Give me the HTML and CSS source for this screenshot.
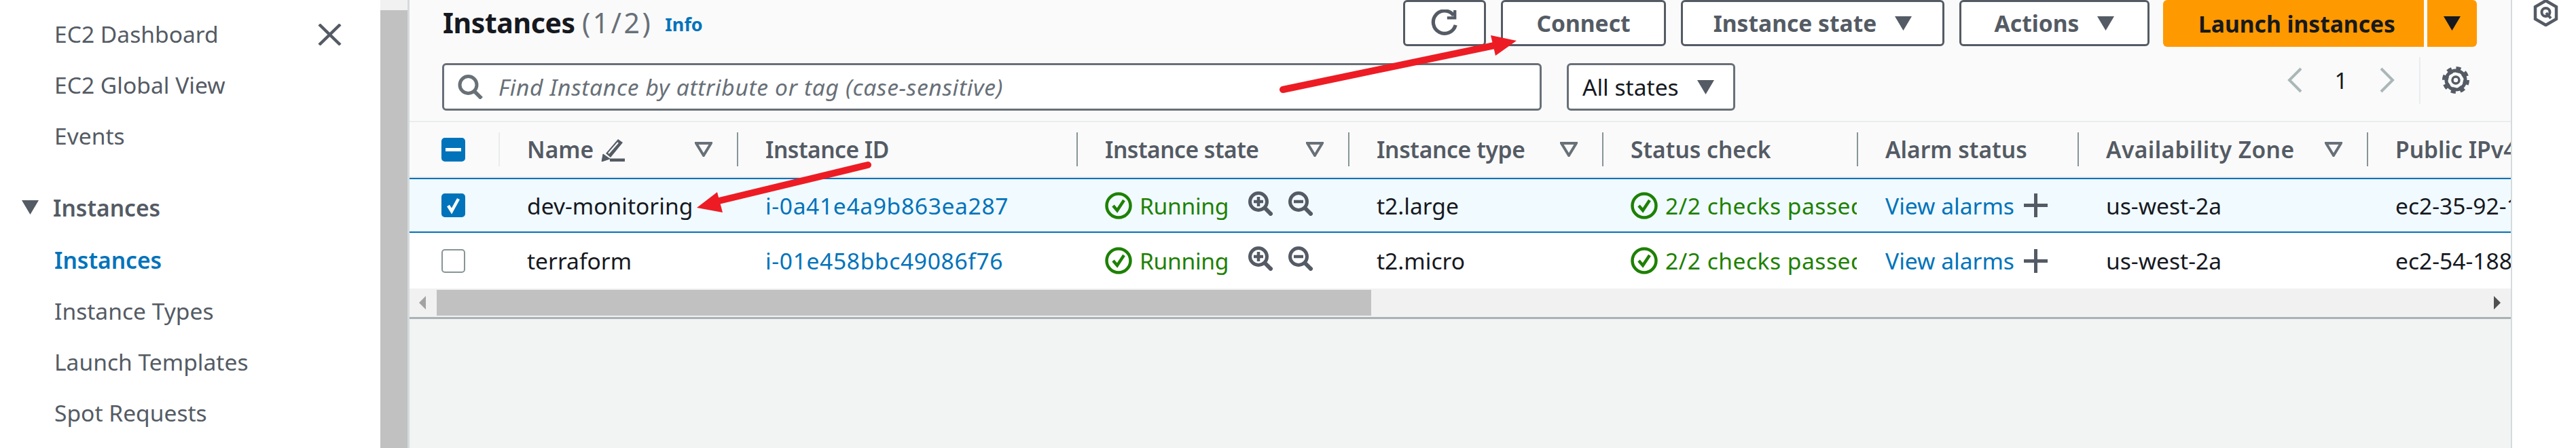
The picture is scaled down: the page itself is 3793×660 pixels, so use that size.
FILE: index.html
```html
<!DOCTYPE html>
<html lang="en">
<head>
<meta charset="utf-8">
<title>Instances | EC2</title>
<link rel="stylesheet" href="styles.css">
</head>
<body>
<div class="app">
  <nav class="sidebar">
    <div class="nav-top">
      <a class="nav-link">EC2 Dashboard</a>
      <svg class="close" viewBox="0 0 35 32"><path d="M2 1 33 31M33 1 2 31" fill="none" stroke="#545b64" stroke-width="4.5"/></svg>
    </div>
    <a class="nav-link">EC2 Global View</a>
    <a class="nav-link">Events</a>
    <div class="nav-section">
      <svg class="nav-caret" viewBox="0 0 25 21"><path d="M0 0H25L12.500 21Z" fill="#545b64"/></svg>
      <span>Instances</span>
    </div>
    <a class="nav-link active">Instances</a>
    <a class="nav-link">Instance Types</a>
    <a class="nav-link">Launch Templates</a>
    <a class="nav-link">Spot Requests</a>
  </nav>
  <div class="vscroll"><div class="vthumb"></div></div>
  <main class="main">
    <header class="top">
      <h1 class="title">Instances <span class="count">(1/2)</span></h1>
      <a class="info">Info</a>
      <div class="actions">
        <button class="btn btn-refresh"><svg viewBox="0 0 42 42" class="ic-refresh"><path d="M35 9A17.500 17.500 0 1 0 38 24" fill="none" stroke="#545b64" stroke-width="5.500"/><path d="M37 1V13H25" fill="none" stroke="#545b64" stroke-width="4.500"/></svg></button>
        <button class="btn btn-connect">Connect</button>
        <button class="btn btn-state">Instance state <svg class="caret" viewBox="0 0 25 21"><path d="M0 0H25L12.500 21Z" fill="#545b64"/></svg></button>
        <button class="btn btn-actions">Actions <svg class="caret" viewBox="0 0 25 21"><path d="M0 0H25L12.500 21Z" fill="#545b64"/></svg></button>
        <div class="launch">
          <button class="btn-launch">Launch instances</button>
          <button class="btn-launch-caret"><svg class="caret" viewBox="0 0 25 21"><path d="M0 0H25L12.500 21Z" fill="#16191f"/></svg></button>
        </div>
      </div>
    </header>
    <section class="filters">
      <div class="search">
        <svg class="ic-search" viewBox="0 0 37 36"><circle cx="15.500" cy="15" r="12.500" fill="none" stroke="#687078" stroke-width="5"/><path d="M24 24 35 35" stroke="#687078" stroke-width="5.500" fill="none"/></svg>
        <span class="placeholder">Find Instance by attribute or tag (case-sensitive)</span>
      </div>
      <div class="states">All states <svg class="caret" viewBox="0 0 25 21"><path d="M0 0H25L12.500 21Z" fill="#545b64"/></svg></div>
      <div class="pager">
        <svg class="chev" viewBox="0 0 24 38"><path d="M21 2 4 19 21 36" fill="none" stroke="#aab7b8" stroke-width="4"/></svg>
        <span class="page">1</span>
        <svg class="chev" viewBox="0 0 24 38"><path d="M3 2 20 19 3 36" fill="none" stroke="#aab7b8" stroke-width="4"/></svg>
      </div>
      <div class="settings">
        <svg class="gear" viewBox="0 0 40 40"><circle cx="20" cy="20" r="14" fill="none" stroke="#545b64" stroke-width="5"/><circle cx="20" cy="20" r="15.500" fill="none" stroke="#545b64" stroke-width="9" stroke-dasharray="6.170 6"/><circle cx="20" cy="20" r="5" fill="none" stroke="#545b64" stroke-width="3.500"/></svg>
      </div>
    </section>
    <section class="table">
      <div class="row head">
        <div class="cell"><span class="check check-mixed"></span></div>
        <div class="cell"><div class="hcell first"><span class="name-h">Name</span><svg class="pencil" viewBox="0 0 36 36"><path d="M8 24 26 3l7 5L15 30z" fill="#545b64"/><path d="M2 36l2-11 10 7z" fill="#545b64" stroke="#545b64" stroke-width="1"/><path d="M14 34H36" stroke="#545b64" stroke-width="5"/><path d="M12 24 26 8" stroke="#fafafa" stroke-width="2"/></svg><svg class="filter" viewBox="0 0 26 22"><path d="M2 2H24L13 20Z" fill="none" stroke="#687078" stroke-width="4"/></svg></div></div>
        <div class="cell"><div class="hcell tight-2">Instance ID</div></div>
        <div class="cell"><div class="hcell tight-2">Instance state<svg class="filter" viewBox="0 0 26 22"><path d="M2 2H24L13 20Z" fill="none" stroke="#687078" stroke-width="4"/></svg></div></div>
        <div class="cell"><div class="hcell tight-1">Instance type<svg class="filter" viewBox="0 0 26 22"><path d="M2 2H24L13 20Z" fill="none" stroke="#687078" stroke-width="4"/></svg></div></div>
        <div class="cell"><div class="hcell">Status check</div></div>
        <div class="cell"><div class="hcell">Alarm status</div></div>
        <div class="cell"><div class="hcell loose">Availability Zone<svg class="filter" viewBox="0 0 26 22"><path d="M2 2H24L13 20Z" fill="none" stroke="#687078" stroke-width="4"/></svg></div></div>
        <div class="cell"><div class="hcell clip">Public IPv4 DNS</div></div>
      </div>
      <div class="row body selected">
        <div class="cell"><span class="check check-on"><svg viewBox="0 0 35 35"><path d="M10 18 15 26 25 8" fill="none" stroke="#fff" stroke-width="4.500"/></svg></span></div>
        <div class="cell pad">dev-monitoring</div>
        <div class="cell pad"><a class="link iid">i-0a41e4a9b863ea287</a></div>
        <div class="cell pad state"><svg class="ok" viewBox="0 0 40 40"><circle cx="20" cy="20" r="17.500" fill="none" stroke="#1d8102" stroke-width="4.500"/><path d="M12 20 18 27 28 12" fill="none" stroke="#1d8102" stroke-width="4.500"/></svg><span class="green run">Running</span><svg class="zoom zoom-first" viewBox="0 0 36 36"><circle cx="15" cy="15" r="12.500" fill="none" stroke="#545b64" stroke-width="5"/><path d="M24 24 35 35" stroke="#545b64" stroke-width="6"/><path d="M15 8V22M8 15H22" stroke="#545b64" stroke-width="4.500"/></svg><svg class="zoom" viewBox="0 0 36 36"><circle cx="15" cy="15" r="12.500" fill="none" stroke="#545b64" stroke-width="5"/><path d="M24 24 35 35" stroke="#545b64" stroke-width="6"/><path d="M8 15H22" stroke="#545b64" stroke-width="4.500"/></svg></div>
        <div class="cell pad">t2.large</div>
        <div class="cell pad status"><svg class="ok" viewBox="0 0 40 40"><circle cx="20" cy="20" r="17.500" fill="none" stroke="#1d8102" stroke-width="4.500"/><path d="M12 20 18 27 28 12" fill="none" stroke="#1d8102" stroke-width="4.500"/></svg><span class="green nowrap checks">2/2 checks passed</span></div>
        <div class="cell pad alarm"><a class="link">View alarms</a><svg class="plus" viewBox="0 0 35 35"><path d="M17.500 0V35M0 17.500H35" stroke="#545b64" stroke-width="5"/></svg></div>
        <div class="cell pad">us-west-2a</div>
        <div class="cell pad clip">ec2-35-92-100-20.us-west-2</div>
      </div>
      <div class="row body plain">
        <div class="cell"><span class="check"></span></div>
        <div class="cell pad">terraform</div>
        <div class="cell pad"><a class="link iid">i-01e458bbc49086f76</a></div>
        <div class="cell pad state"><svg class="ok" viewBox="0 0 40 40"><circle cx="20" cy="20" r="17.500" fill="none" stroke="#1d8102" stroke-width="4.500"/><path d="M12 20 18 27 28 12" fill="none" stroke="#1d8102" stroke-width="4.500"/></svg><span class="green run">Running</span><svg class="zoom zoom-first" viewBox="0 0 36 36"><circle cx="15" cy="15" r="12.500" fill="none" stroke="#545b64" stroke-width="5"/><path d="M24 24 35 35" stroke="#545b64" stroke-width="6"/><path d="M15 8V22M8 15H22" stroke="#545b64" stroke-width="4.500"/></svg><svg class="zoom" viewBox="0 0 36 36"><circle cx="15" cy="15" r="12.500" fill="none" stroke="#545b64" stroke-width="5"/><path d="M24 24 35 35" stroke="#545b64" stroke-width="6"/><path d="M8 15H22" stroke="#545b64" stroke-width="4.500"/></svg></div>
        <div class="cell pad">t2.micro</div>
        <div class="cell pad status"><svg class="ok" viewBox="0 0 40 40"><circle cx="20" cy="20" r="17.500" fill="none" stroke="#1d8102" stroke-width="4.500"/><path d="M12 20 18 27 28 12" fill="none" stroke="#1d8102" stroke-width="4.500"/></svg><span class="green nowrap checks">2/2 checks passed</span></div>
        <div class="cell pad alarm"><a class="link">View alarms</a><svg class="plus" viewBox="0 0 35 35"><path d="M17.500 0V35M0 17.500H35" stroke="#545b64" stroke-width="5"/></svg></div>
        <div class="cell pad">us-west-2a</div>
        <div class="cell pad clip">ec2-54-188-10-25.us-west-2</div>
      </div>
      <div class="hscroll">
        <svg class="harrow" viewBox="0 0 10 20"><path d="M10 0V20L0 10Z" fill="#a3a3a3"/></svg>
        <div class="hthumb"></div>
        <svg class="harrow harrow-right" viewBox="0 0 10 20"><path d="M0 0V20L10 10Z" fill="#505050"/></svg>
      </div>
    </section>
    <div class="rest"></div>
  </main>
  <aside class="rail">
    <svg class="hex" viewBox="0 0 37 40"><path d="M18.500 2 34 11V29L18.500 38 3 29V11Z" fill="none" stroke="#545b64" stroke-width="4.500"/><circle cx="18.500" cy="19" r="6" fill="none" stroke="#545b64" stroke-width="4"/><path d="M19 20 26 28" stroke="#545b64" stroke-width="4"/></svg>
  </aside>
  <svg class="arrows" viewBox="0 0 3793 660">
    <path d="M1889 132 2205 66" stroke="#ed1c24" stroke-width="10" stroke-linecap="round" fill="none"/>
    <path d="M2233 60 2195 52 2202 82Z" fill="#ed1c24"/>
    <path d="M1278 243 1050 298" stroke="#ed1c24" stroke-width="10" stroke-linecap="round" fill="none"/>
    <path d="M1026 306 1056 283 1064 313Z" fill="#ed1c24"/>
  </svg>
</div>
</body>
</html>
```
FILE: styles.css
```css
* { box-sizing: border-box; }
html, body { margin: 0; padding: 0; }
body {
  width: 3793px;
  height: 660px;
  overflow: hidden;
  font-family: "Noto Sans", "Liberation Sans", sans-serif;
  font-size: 33.6px;
  color: #16191f;
  background: #fff;
}
svg { display: block; flex: none; }
.app { position: relative; display: flex; height: 660px; overflow: hidden; }

/* sidebar */
.sidebar { width: 560px; flex: none; background: #fff; padding: 13px 0 0 80px; color: #545b64; }
.nav-top { display: flex; align-items: center; }
.nav-link { display: block; height: 75px; line-height: 75px; white-space: nowrap; }
.close { width: 35px; height: 32px; margin-left: 146px; }
.nav-section { display: flex; align-items: center; height: 75px; margin: 30px 0 0 -48px; font-weight: 600; }
.nav-caret { width: 25px; height: 21px; margin-right: 21px; }
.active { color: #0073bb; font-weight: 600; height: 78px; line-height: 80px; }

.vscroll { width: 40px; flex: none; background: #f1f1f1; padding-top: 15px; }
.vthumb { height: 100%; background: #c1c1c1; }

/* main */
.main { flex: none; width: 3097px; border-left: 3px solid #d5dbdb; display: flex; flex-direction: column; background: #fafafa; overflow: hidden; }
.top { display: flex; align-items: center; height: 69px; padding-left: 49px; flex: none; }
.title { margin: -4px 0 0; font-size: 41px; font-weight: 700; letter-spacing: -0.4px; color: #16191f; white-space: nowrap; }
.count { font-weight: 400; color: #687078; letter-spacing: 3.5px; }
.info { color: #0073bb; font-size: 27px; font-weight: 700; margin-left: 18px; padding-top: 1px; }
.actions { display: flex; margin-left: auto; margin-right: 50px; height: 69px; }
.btn { height: 68px; margin-left: 22px; background: #fff; border: 3px solid #545b64; border-radius: 6px; font: 700 33.600px "Noto Sans", sans-serif; color: #545b64; display: flex; align-items: center; justify-content: center; padding: 0; }
.btn-refresh { width: 122px; margin-left: 0; }
.ic-refresh { width: 42px; height: 40px; }
.btn-connect { width: 243px; }
.btn-state { width: 388px; }
.btn-actions { width: 280px; }
.caret { width: 25px; height: 21px; margin-left: 27px; }
.launch { display: flex; margin-left: 20px; }
.btn-launch, .btn-launch-caret { height: 69px; background: #ff9900; border: 0; font: 700 33.600px "Noto Sans", sans-serif; color: #16191f; padding: 0; display: flex; align-items: center; justify-content: center; }
.btn-launch { width: 384px; padding-left: 10px; border-radius: 6px 0 0 6px; }
.btn-launch-caret { width: 73px; margin-left: 5px; border-radius: 0 6px 6px 0; }
.btn-launch-caret .caret { margin-left: 0; }

.filters { display: flex; align-items: center; height: 70px; margin-top: 24px; padding-left: 48px; flex: none; }
.search { width: 1619px; height: 70px; background: #fff; border: 3px solid #687078; border-radius: 6px; display: flex; align-items: center; padding-left: 20px; }
.ic-search { width: 37px; height: 36px; }
.placeholder { font-style: italic; color: #687078; margin-left: 23px; white-space: nowrap; letter-spacing: 0.65px; }
.states { width: 248px; height: 70px; margin-left: 37px; background: #fff; border: 3px solid #687078; border-radius: 6px; display: flex; align-items: center; padding-left: 20px; }
.pager { display: flex; align-items: center; margin: -20px 0 0 812px; }
.chev { width: 24px; height: 38px; }
.page { width: 112px; text-align: center; font-weight: 400; }
.settings { height: 69px; margin: -20px 0 0 35px; padding-left: 32px; border-left: 2px solid #eaeded; display: flex; align-items: center; }
.gear { width: 40px; height: 40px; }

/* table */
.table { margin-top: 15px; border-top: 2px solid #eaeded; flex: none; }
.row { display: grid; grid-template-columns: 131px 351px 500px 400px 374px 375px 325px 426px 215px; align-items: center; }
.head { height: 82px; border-bottom: 2px solid #eaeded; font-weight: 600; color: #545b64; }
.cell { min-width: 0; display: flex; align-items: center; white-space: nowrap; }
.cell:first-child { padding-left: 47px; }
.hcell { width: 100%; height: 50px; border-left: 2px solid #879596; padding: 0 36px 0 40px; display: flex; align-items: center; }
.hcell.first { border-left-color: #eaeded; }
.tight-2 { letter-spacing: -0.5px; }
.tight-1 { letter-spacing: -0.35px; }
.loose { letter-spacing: 0.4px; }
.filter { width: 26px; height: 22px; margin-left: auto; }
.pencil { width: 36px; height: 36px; margin-left: 10px; }
.clip { overflow: hidden; }
.pad { padding-left: 42px; overflow: hidden; }
.body { color: #16191f; }
.selected { height: 81px; background: #f1faff; border-top: 2px solid #0073bb; border-bottom: 2px solid #0073bb; }
.plain { height: 82px; background: #fff; }
.check { display: block; width: 35px; height: 35px; border: 2px solid #879596; border-radius: 5px; background: #fff; }
.check-on { background: #0073bb; border-color: #0073bb; }
.check-on svg { margin: -2px; }
.check-mixed { background: #0073bb; border-color: #0073bb; position: relative; }
.check-mixed::after { content: ""; position: absolute; left: 4px; right: 4px; top: 13px; height: 5px; background: #fff; }
.link { color: #0073bb; }
.iid { letter-spacing: 0.65px; }
.green { color: #1d8102; }
.run { letter-spacing: -0.3px; }
.checks { letter-spacing: 0.5px; }
.nowrap { white-space: nowrap; }
.ok { width: 40px; height: 40px; margin-right: 11px; }
.zoom { width: 36px; height: 36px; margin-left: 23px; margin-top: -6px; }
.zoom-first { margin-left: 29px; }
.plus { width: 35px; height: 35px; margin-left: 14px; }
.status { overflow: hidden; padding-right: 0; }
.hscroll { display: flex; align-items: center; height: 42px; background: #f1f1f1; padding: 2px 15px 2px 14px; border-top: 0; box-shadow: 0 3px 0 #aab2b5; }
.harrow { width: 10px; height: 20px; }
.hthumb { width: 1376px; height: 38px; background: #c1c1c1; margin-left: 16px; }
.harrow-right { margin-left: auto; }
.rest { flex: 1; margin-top: 3px; background: #f2f3f3; }

/* rail */
.rail { flex: 1; background: #fff; border-left: 2px solid #d5dbdb; padding-left: 31px; }
.hex { width: 37px; height: 40px; margin-top: -1px; }

/* annotation arrows over the page */
.arrows { position: absolute; left: 0; top: 0; width: 3793px; height: 660px; pointer-events: none; }
```
